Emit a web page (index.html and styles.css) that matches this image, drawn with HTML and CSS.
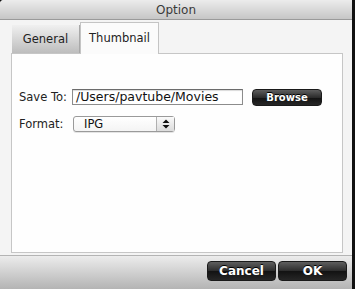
FILE: index.html
```html
<!DOCTYPE html>
<html>
<head>
<meta charset="utf-8">
<link rel="stylesheet" href="styles.css">
</head>
<body>
<div class="window">
  <div class="titlebar">Option</div>
  <div class="main">
    <div class="tabs">
      <div class="tab">General</div>
      <div class="tab active">Thumbnail</div>
    </div>
    <div class="panel">
      <div class="row">
        <span class="label">Save To:</span>
        <div class="input">/Users/pavtube/Movies</div>
        <div class="btn browse">Browse</div>
      </div>
      <div class="row row2">
        <span class="label">Format:</span>
        <div class="select">
          <span class="val">IPG</span>
          <span class="stepper">
            <svg width="8" height="10" viewBox="0 0 8 10"><path d="M4 0.5 L7.5 4 L0.5 4 Z M4 9.5 L7.5 6 L0.5 6 Z" fill="#111"/></svg>
          </span>
        </div>
      </div>
    </div>
  </div>
  <div class="footer">
    <div class="btn fbtn">Cancel</div>
    <div class="btn fbtn">OK</div>
  </div>
</div>
</body>
</html>
```

FILE: styles.css
```css
html, body {
  margin: 0;
  padding: 0;
}
body {
  background: #111;
  width: 355px;
  height: 289px;
  overflow: hidden;
  font-family: "DejaVu Sans", "Liberation Sans", sans-serif;
}
.window {
  width: 352px;
  height: 289px;
  display: flex;
  flex-direction: column;
  background: #f2f2f2;
  border-top-left-radius: 4px;
  overflow: hidden;
}
.titlebar {
  height: 20px;
  flex: none;
  box-sizing: border-box;
  border-bottom: 1px solid #9a9a9a;
  background: linear-gradient(#ececec, #c6c6c6);
  text-align: center;
  font-size: 12px;
  line-height: 21px;
  color: #3a3a3a;
}
.main {
  flex: 1;
  padding: 2px 9px 2px 11px;
  display: flex;
  flex-direction: column;
  background: #f4f4f4;
}
.tabs {
  display: flex;
  align-items: flex-end;
  height: 31px;
  padding-left: 1px;
}
.tab {
  width: 68px;
  height: 28px;
  box-sizing: border-box;
  background: linear-gradient(#f0f0f0, #bdbdbd);
  border-right: 1px solid #a8a8a8;
  font-size: 11.5px;
  color: #222;
  text-align: center;
  line-height: 28px;
}
.tab.active {
  width: 79px;
  height: 32px;
  background: #fbfbfb;
  border: 1px solid #c4c4c4;
  border-bottom: none;
  line-height: 30px;
  margin-bottom: -1px;
  position: relative;
}
.panel {
  flex: 1;
  background: #fefefe;
  border: 1px solid #c6c6c6;
  padding: 34px 0 0 7px;
}
.row {
  display: flex;
  align-items: center;
  height: 18px;
}
.row2 {
  margin-top: 9px;
}
.label {
  width: 53px;
  font-size: 11.5px;
  color: #222;
}
.input {
  width: 171px;
  height: 16px;
  box-sizing: border-box;
  border: 1px solid #8c8c8c;
  border-top-color: #6c6c6c;
  background: #fff;
  font-size: 12.5px;
  line-height: 14px;
  padding-left: 3px;
  color: #111;
  box-shadow: inset 0 1px 1px rgba(0,0,0,0.15);
}
.btn {
  background: linear-gradient(#5e5e5e 0%, #2c2c2c 50%, #121212 51%, #262626 100%);
  color: #fff;
  font-weight: bold;
  text-align: center;
  border-radius: 4px;
  border: 1px solid #1a1a1a;
  box-sizing: border-box;
  text-shadow: 0 -1px 0 #000;
}
.browse {
  margin-left: 9px;
  width: 70px;
  height: 17px;
  font-size: 10px;
  line-height: 15px;
}
.select {
  margin-left: 1px;
  width: 102px;
  height: 16px;
  box-sizing: border-box;
  border: 1px solid #9a9a9a;
  border-radius: 3px;
  background: linear-gradient(#ffffff, #f4f4f4);
  display: flex;
  align-items: center;
  box-shadow: 0 1px 0 rgba(0,0,0,0.1);
}
.val {
  flex: 1;
  font-size: 11.5px;
  padding-left: 10px;
  color: #111;
}
.stepper {
  width: 17px;
  height: 100%;
  border-left: 1px solid #b0b0b0;
  display: flex;
  align-items: center;
  justify-content: center;
  background: linear-gradient(#fafafa, #dcdcdc);
}
.footer {
  height: 34px;
  flex: none;
  box-sizing: border-box;
  border-top: 1px solid #b4b4b4;
  background: linear-gradient(#ececec, #b4b4b4);
  display: flex;
  justify-content: flex-end;
  align-items: flex-start;
  padding: 5px 5px 0 0;
  gap: 2px;
}
.fbtn {
  width: 69px;
  height: 20px;
  font-size: 12px;
  line-height: 18px;
}
```
